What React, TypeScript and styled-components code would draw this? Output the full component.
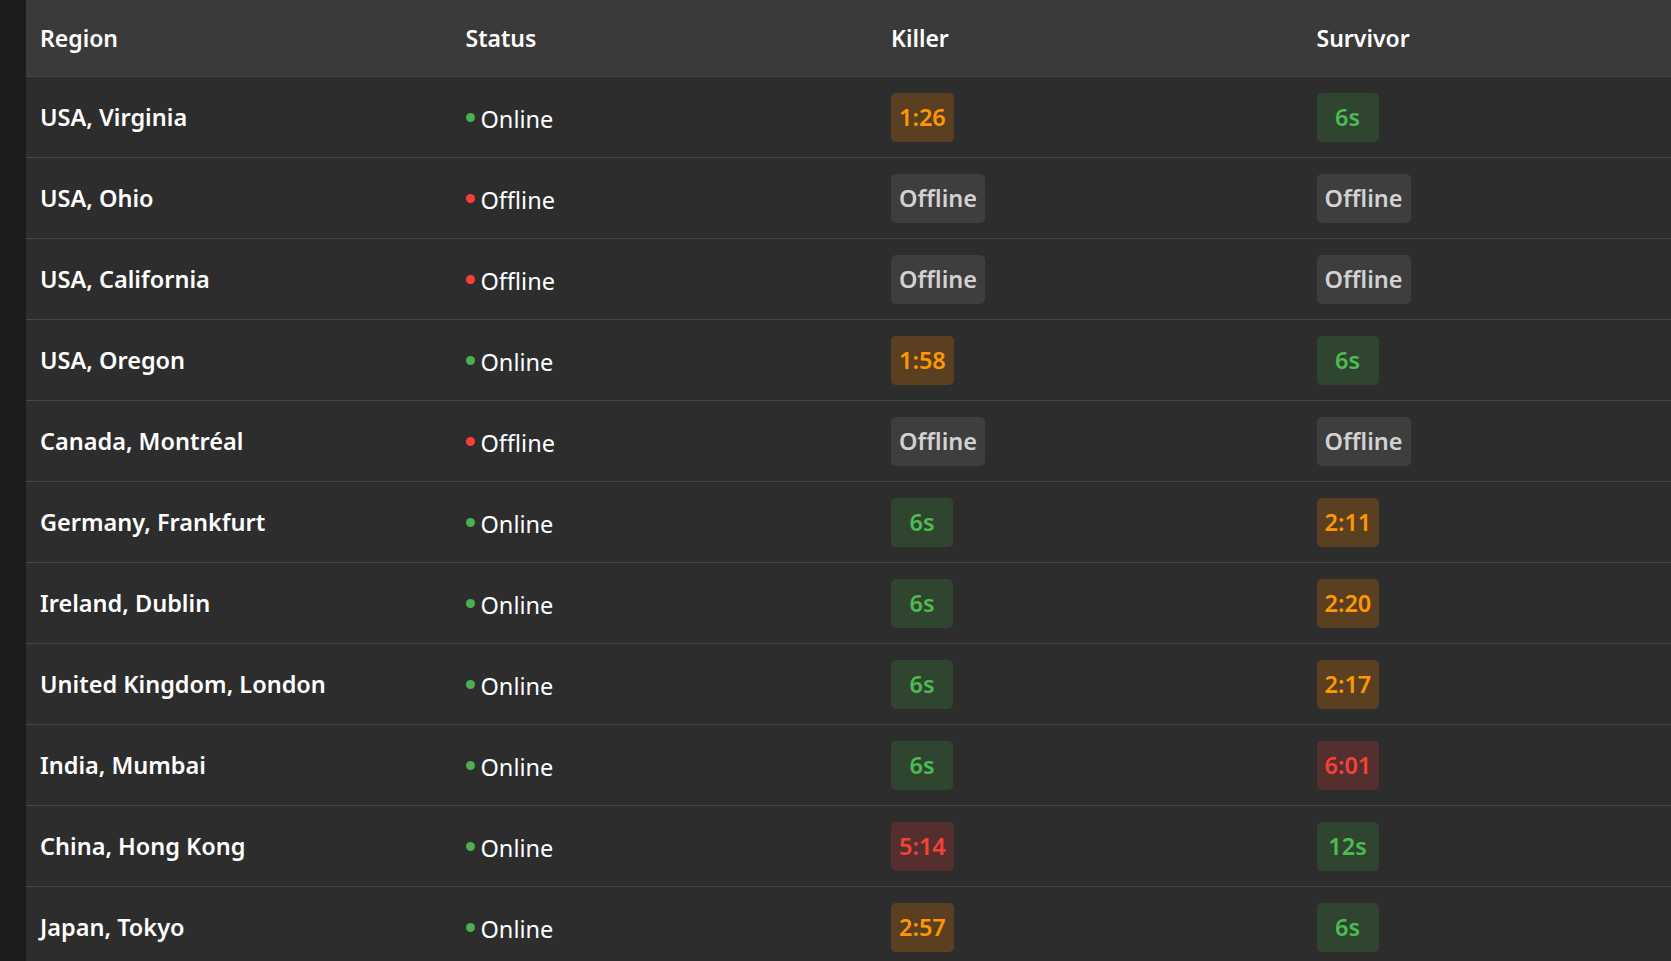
import React from "react";
import styled, { createGlobalStyle, css } from "styled-components";

const Global = createGlobalStyle`
  html, body { margin: 0; padding: 0; background: #1c1c1c; overflow: hidden; }
  body { font-family: "Noto Sans", "Open Sans", sans-serif; }
`;

const Page = styled.div`
  padding-left: 26px;
  min-height: 100vh;
`;

const Table = styled.table`
  width: 1702px;
  table-layout: fixed;
  border-collapse: collapse;
  background: #2d2d2d;
  color: #ffffff;
`;

const HeadCell = styled.th`
  height: 76px;
  padding: 0 14px;
  background: #3a3a3a;
  text-align: left;
  font-size: 23px;
  font-weight: 600;
  border-bottom: 1px solid #464646;
`;

const Row = styled.tr`
  height: 81px;
  border-bottom: 1px solid #464646;
`;

const Cell = styled.td`
  padding: 0 14px;
  vertical-align: middle;
  font-size: 23.5px;
`;

const RegionCell = styled(Cell)`
  font-weight: 600;
`;

const Dot = styled.span<{ $online: boolean }>`
  display: inline-block;
  width: 9px;
  height: 9px;
  border-radius: 50%;
  margin-right: 6px;
  vertical-align: middle;
  position: relative;
  top: -2px;
  background: ${(p) => (p.$online ? "#4caf50" : "#f44336")};
`;

const StatusText = styled.span`
  font-weight: 400;
  position: relative;
  top: 2px;
`;

type Tone = "green" | "orange" | "red" | "gray";

const tones: Record<Tone, ReturnType<typeof css>> = {
  green: css`background: #304530; color: #4cbb50;`,
  orange: css`background: #5a4021; color: #ff9800;`,
  red: css`background: #552e2e; color: #f44336;`,
  gray: css`background: #3e3e3e; color: #d2d2d2;`,
};

const Badge = styled.span<{ $tone: Tone }>`
  display: inline-block;
  min-width: 62px;
  box-sizing: border-box;
  text-align: center;
  padding: 8px 8px;
  border-radius: 5px;
  font-weight: 600;
  font-size: 23.5px;
  line-height: 33px;
  ${(p) => tones[p.$tone]}
`;

type Rowd = { region: string; online: boolean; killer: string; survivor: string };

const rows: Rowd[] = [
  { region: "USA, Virginia", online: true, killer: "1:26", survivor: "6s" },
  { region: "USA, Ohio", online: false, killer: "Offline", survivor: "Offline" },
  { region: "USA, California", online: false, killer: "Offline", survivor: "Offline" },
  { region: "USA, Oregon", online: true, killer: "1:58", survivor: "6s" },
  { region: "Canada, Montréal", online: false, killer: "Offline", survivor: "Offline" },
  { region: "Germany, Frankfurt", online: true, killer: "6s", survivor: "2:11" },
  { region: "Ireland, Dublin", online: true, killer: "6s", survivor: "2:20" },
  { region: "United Kingdom, London", online: true, killer: "6s", survivor: "2:17" },
  { region: "India, Mumbai", online: true, killer: "6s", survivor: "6:01" },
  { region: "China, Hong Kong", online: true, killer: "5:14", survivor: "12s" },
  { region: "Japan, Tokyo", online: true, killer: "2:57", survivor: "6s" },
];

function toneOf(v: string): Tone {
  if (v === "Offline") return "gray";
  if (v.endsWith("s")) return "green";
  const [m] = v.split(":").map(Number);
  if (m >= 5) return "red";
  return "orange";
}

export default function App() {
  return (
    <Page>
      <Global />
      <Table>
        <thead>
          <tr>
            <HeadCell>Region</HeadCell>
            <HeadCell>Status</HeadCell>
            <HeadCell>Killer</HeadCell>
            <HeadCell>Survivor</HeadCell>
          </tr>
        </thead>
        <tbody>
          {rows.map((r) => (
            <Row key={r.region}>
              <RegionCell>{r.region}</RegionCell>
              <Cell>
                <Dot $online={r.online} />
                <StatusText>{r.online ? "Online" : "Offline"}</StatusText>
              </Cell>
              <Cell>
                <Badge $tone={toneOf(r.killer)}>{r.killer}</Badge>
              </Cell>
              <Cell>
                <Badge $tone={toneOf(r.survivor)}>{r.survivor}</Badge>
              </Cell>
            </Row>
          ))}
        </tbody>
      </Table>
    </Page>
  );
}
